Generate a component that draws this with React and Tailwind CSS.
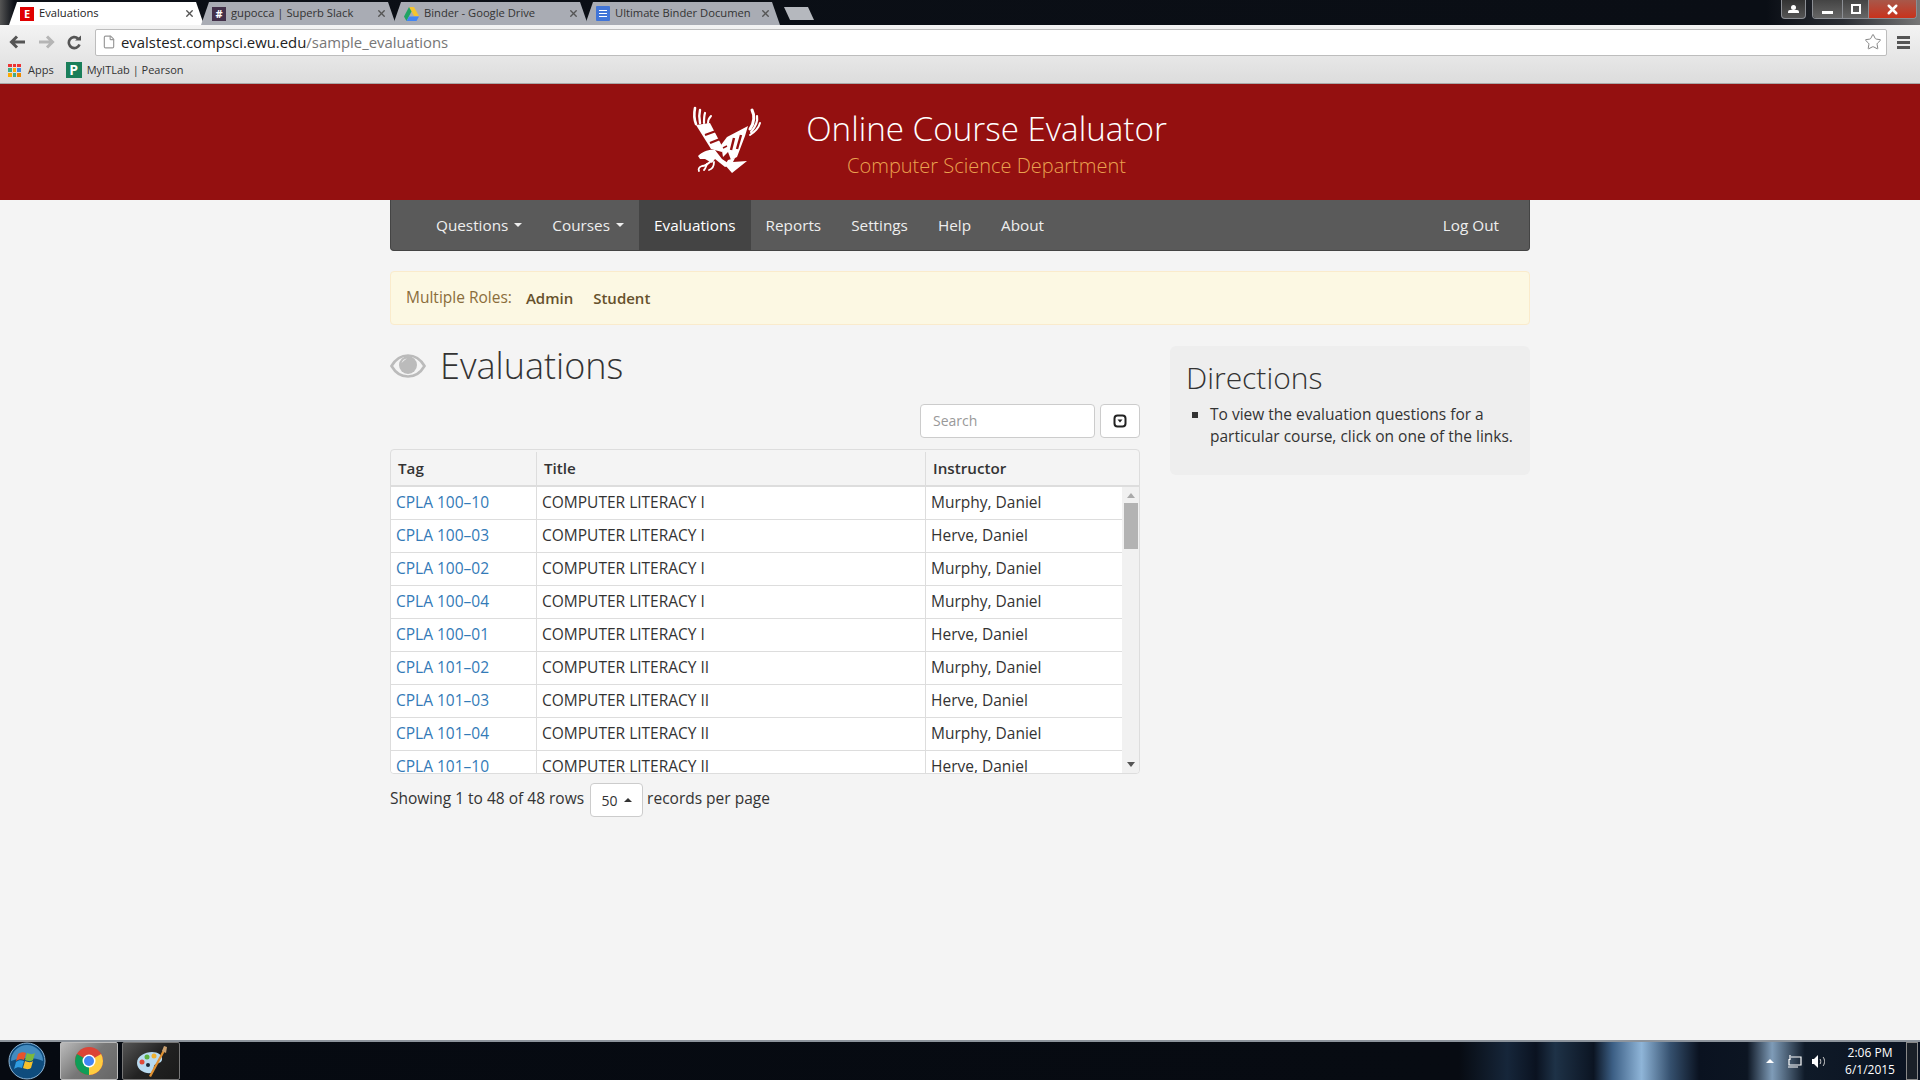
import React from 'react'
import { Star, X, File } from 'lucide-react'

const rows = [
  ['CPLA 100–10', 'COMPUTER LITERACY I', 'Murphy, Daniel'],
  ['CPLA 100–03', 'COMPUTER LITERACY I', 'Herve, Daniel'],
  ['CPLA 100–02', 'COMPUTER LITERACY I', 'Murphy, Daniel'],
  ['CPLA 100–04', 'COMPUTER LITERACY I', 'Murphy, Daniel'],
  ['CPLA 100–01', 'COMPUTER LITERACY I', 'Herve, Daniel'],
  ['CPLA 101–02', 'COMPUTER LITERACY II', 'Murphy, Daniel'],
  ['CPLA 101–03', 'COMPUTER LITERACY II', 'Herve, Daniel'],
  ['CPLA 101–04', 'COMPUTER LITERACY II', 'Murphy, Daniel'],
  ['CPLA 101–10', 'COMPUTER LITERACY II', 'Herve, Daniel'],
]

function Tab({ icon, label, active }) {
  return (
    <div className={`-mr-[3px] flex h-[23px] w-[195px] shrink-0 items-center pl-[11px] pr-[9px] text-[11.2px] [clip-path:polygon(0_100%,8px_0,calc(100%-8px)_0,100%_100%)] ${active ? 'bg-white text-[#222]' : 'bg-[#a9acb4] text-[#333]'}`}>
      <div className="mr-[5px] shrink-0">{icon}</div>
      <span className="flex-1 overflow-hidden whitespace-nowrap">{label}</span>
      <X size={11} strokeWidth={3} className="ml-1 shrink-0 text-[#555]" />
    </div>
  )
}

function Browser() {
  return (
    <div className="font-['Open_Sans',sans-serif]">
      <div className="flex h-[25px] items-end bg-[linear-gradient(90deg,#555_0,#0b0f16_14px,#0a0e15_92%,#2a2d33_96%,#777_100%)] pl-[9px]">
        <Tab active label="Evaluations" icon={
          <div className="flex h-[14px] w-[14px] items-center justify-center bg-[#e00000] text-[11px] font-bold leading-none text-white">E</div>
        } />
        <Tab label="gupocca | Superb Slack" icon={
          <div className="flex h-[14px] w-[14px] items-center justify-center bg-[#43304a] text-[11px] font-bold leading-none text-white">#</div>
        } />
        <Tab label="Binder - Google Drive" icon={
          <svg width="15" height="14" viewBox="0 0 15 14">
            <path d="M5 0h5l5 9h-5z" fill="#f4c430" />
            <path d="M5 0l2.500 4.500L2.500 14 0 9.500z" fill="#1fa463" />
            <path d="M2.500 14l2.500-4.500h10L12.500 14z" fill="#4285f4" />
          </svg>
        } />
        <Tab label="Ultimate Binder Documen" icon={
          <div className="flex h-[15px] w-[14px] flex-col justify-center gap-[2px] rounded-[1px] bg-[#4175d8] px-[3px]">
            <div className="h-px bg-white" />
            <div className="h-px bg-white" />
            <div className="h-px bg-white" />
          </div>
        } />
        <div className="mb-[5px] ml-[7px] h-[13px] w-[30px] bg-[#b5b8be] [clip-path:polygon(0_0,80%_0,100%_100%,20%_100%)]" />
        <div className="ml-auto flex h-[19px] self-start">
          <div className="mr-[6px] flex w-[25px] items-center justify-center rounded-b-[4px] border border-t-0 border-[#8b8e94] bg-[linear-gradient(#333,#555)]">
            <div className="flex flex-col items-center">
              <div className="h-[5px] w-[5px] rounded-full bg-white" />
              <div className="h-[3px] w-[11px] rounded-t-[2px] bg-white" />
            </div>
          </div>
          <div className="flex overflow-hidden rounded-b-[4px] border border-t-0 border-[#8b8e94]">
            <div className="flex w-[29px] items-end justify-center bg-[linear-gradient(#444,#666)] pb-[4px]">
              <div className="h-[3px] w-[11px] bg-white" />
            </div>
            <div className="flex w-[27px] items-center justify-center border-x border-[#8b8e94] bg-[linear-gradient(#444,#666)]">
              <div className="h-[10px] w-[10px] border-2 border-white" />
            </div>
            <div className="flex w-[47px] items-center justify-center bg-[linear-gradient(#a8584a,#c8321c)]">
              <X size={15} strokeWidth={4} className="text-white" />
            </div>
          </div>
          <div className="w-[3px]" />
        </div>
      </div>
      <div className="flex h-[59px] flex-col bg-[linear-gradient(#f3f3f3,#dcdcdc)]">
        <div className="flex h-[34px] items-center">
          <div className="flex w-[95px] items-center pl-[9px]">
            <svg width="17" height="14" viewBox="0 0 17 14" fill="none" stroke="#555" strokeWidth="3">
              <path d="M8 1.500 2.500 7 8 12.500M3 7h13" />
            </svg>
            <svg className="ml-[12px]" width="17" height="14" viewBox="0 0 17 14" fill="none" stroke="#b5b5b5" strokeWidth="3">
              <path d="M9 1.500 14.500 7 9 12.500M14 7H1" />
            </svg>
            <svg className="ml-[12px]" width="15" height="15" viewBox="0 0 15 15" fill="none" stroke="#555" strokeWidth="2.600">
              <path d="M12.500 9.500A5.500 5.500 0 1 1 11 3.500" />
              <path d="M8 5.500h6v-5z" fill="#555" stroke="none" />
            </svg>
          </div>
          <div className="flex h-[27px] flex-1 items-center rounded-[2px] border border-[#bdbdbd] bg-white pl-[6px] text-[14.9px]">
            <File size={14} className="mr-[5px] text-[#999]" />
            <span className="text-[#222]">evalstest.compsci.ewu.edu</span>
            <span className="text-[#777]">/sample_evaluations</span>
            <Star size={18} strokeWidth={1.200} className="ml-auto mr-[4px] text-[#777]" />
          </div>
          <div className="flex w-[33px] flex-col items-center gap-[2px]">
            <div className="h-[3px] w-[13px] bg-[#555]" />
            <div className="h-[3px] w-[13px] bg-[#555]" />
            <div className="h-[3px] w-[13px] bg-[#555]" />
          </div>
        </div>
        <div className="flex flex-1 items-center border-b border-[#a8a8a8] pb-[2px] pl-[8px] text-[11px] text-[#333]">
          <div className="grid h-[13px] w-[13px] grid-cols-3 gap-[1px]">
            <div className="bg-[#e33]" /><div className="bg-[#e33]" /><div className="bg-[#e33]" />
            <div className="bg-[#4a8]" /><div className="bg-[#fa0]" /><div className="bg-[#48d]" />
            <div className="bg-[#fa0]" /><div className="bg-[#4a8]" /><div className="bg-[#e80]" />
          </div>
          <span className="ml-[7px]">Apps</span>
          <div className="ml-[12px] flex h-[16px] w-[16px] items-center justify-center bg-[#1a7f5a] text-[14px] font-bold leading-none text-white">P</div>
          <span className="ml-[5px]">MyITLab | Pearson</span>
        </div>
      </div>
    </div>
  )
}

function EagleLogo() {
  return (
    <svg width="80" height="80" viewBox="0 0 80 80" fill="#fff">
      <g fill="none" stroke="#fff" strokeLinecap="round">
        <path d="M11 25C9 20 9 14 10 9" strokeWidth="2.600" />
        <path d="M15 24C14 19 14 15 15 11" strokeWidth="2.400" />
        <path d="M19 24C19 20 19 17 20 14" strokeWidth="2.200" />
        <path d="M23 24C23 21 24 19 26 17" strokeWidth="2" />
        <path d="M67 11C70 17 69 24 65 30" strokeWidth="3" />
        <path d="M72 17C73 22 71 27 66 33" strokeWidth="2.200" />
        <path d="M75 24C74 28 71 32 65 36" strokeWidth="2" />
      </g>
      <path d="M11 26 25 24 37 47 37 53 26 50z" />
      <path d="M42 38 63 27 60 37 52 58 46 61 43 53 38 58 36 46z" />
      <path d="M13 57C17 53 24 50 30 51L37 60 46 66 40 68 30 60 27 64 20 60 15 60z" />
      <path d="M43 61 50 59 48 63 62 62 47 74 40 66z" />
      <g fill="none" stroke="#941010">
        <path d="M20 36 31 32" strokeWidth="2.200" />
        <path d="M25 44 35 40" strokeWidth="2.200" />
        <path d="M49 39 46 51" strokeWidth="2.400" />
        <path d="M56 36 52 50" strokeWidth="2.400" />
        <path d="M38 49 42 47" strokeWidth="1.500" />
      </g>
      <g fill="none" stroke="#fff" strokeWidth="1.800" strokeLinecap="round">
        <path d="M26 62C22 66 20 67 17 67 14 68 13 70 14 72" />
        <path d="M29 63C29 68 27 70 24 71" />
        <path d="M22 65C21 67 21 69 19 71" />
      </g>
    </svg>
  )
}

function Caret({ up }) {
  return <span className={`ml-[6px] inline-block h-0 w-0 border-x-[4px] border-x-transparent align-middle ${up ? 'border-b-[4px] border-b-current' : 'border-t-[4px] border-t-current'}`} />
}

function NavItem({ label, caret, active }) {
  return (
    <div className={`flex h-full items-center px-[15px] text-[15.3px] ${active ? 'bg-[#444] text-white' : 'text-[#eee]'}`}>
      {label}
      {caret && <Caret />}
    </div>
  )
}

function EvalTable() {
  return (
    <div className="h-[325px] overflow-hidden rounded-[4px] border border-[#ddd]">
      <div className="flex h-[37px] border-b-2 border-[#ddd] pt-[2px] text-[15.2px] font-semibold text-[#333]">
        <div className="flex w-[146px] items-center border-r border-[#ddd] pl-[7px]">Tag</div>
        <div className="flex w-[389px] items-center border-r border-[#ddd] pl-[7px]">Title</div>
        <div className="flex flex-1 items-center pl-[7px]">Instructor</div>
      </div>
      <div className="flex h-[286px]">
        <div className="flex-1 overflow-hidden bg-white">
          {rows.map((r, i) => (
            <div key={i} className="flex h-[33px] shrink-0 border-b border-[#ddd] leading-[31px] text-[#333]">
              <div className="w-[146px] shrink-0 border-r border-[#ddd] pl-[5px] text-[#337ab7]">{r[0]}</div>
              <div className="w-[389px] shrink-0 border-r border-[#ddd] pl-[5px]">{r[1]}</div>
              <div className="flex-1 pl-[5px]">{r[2]}</div>
            </div>
          ))}
        </div>
        <div className="flex w-[17px] shrink-0 flex-col items-center bg-[#f1f1f1]">
          <div className="mt-[6px] h-0 w-0 border-x-[4px] border-b-[5px] border-x-transparent border-b-[#aaa]" />
          <div className="mt-[5px] h-[46px] w-[14px] bg-[#b3b3b3]" />
          <div className="mb-[6px] mt-auto h-0 w-0 border-x-[4px] border-t-[5px] border-x-transparent border-t-[#555]" />
        </div>
      </div>
    </div>
  )
}

function Taskbar() {
  return (
    <div className="relative flex h-[40px] items-center border-t-2 border-[#8d949c] bg-[linear-gradient(90deg,#060a11_0,#070b12_76%,#16263a_78.500%,#0a1220_80%,#1e3247_81%,#0b1422_83%,#3c5f85_84%,#8fb5d8_85.500%,#35506e_87%,#0a1220_88.500%,#0c1522_91%,#7f9cb8_92.300%,#0f1a28_94%,#0a1220_100%)] font-['Open_Sans',sans-serif]">
      <svg className="ml-[8px]" width="38" height="38" viewBox="0 0 38 38">
        <circle cx="19" cy="19" r="18" fill="#0f4c7d" stroke="#8fb6d6" strokeWidth="1" />
        <path d="M3 19a16 16 0 0 1 32 0c-8-4-22-4-32 0z" fill="#5aa6dc" opacity="0.700" />
        <path d="M10 12c3-2 6-2 8-1l-2 7c-2-1-5-1-8 1z" fill="#e8532b" />
        <path d="M19 11c3 1 5 2 8 0l-2 7c-3 2-5 1-8 0z" fill="#7cb93c" />
        <path d="M8 20c3-2 5-2 8-1l-2 7c-3-1-5-1-8 1z" fill="#2f9ce0" />
        <path d="M17 19c3 1 5 2 8 0l-2 7c-3 2-5 1-8 0z" fill="#f5c02c" />
      </svg>
      <div className="ml-[14px] flex h-[38px] w-[58px] items-center justify-center rounded-[2px] border border-[#bbb] bg-[linear-gradient(135deg,#bbb,#777_50%,#666)]">
        <svg width="30" height="30" viewBox="0 0 30 30">
          <circle cx="15" cy="15" r="14" fill="#db4437" />
          <path d="M15 15 2.900 8A14 14 0 0 0 15 29z" fill="#0f9d58" />
          <path d="M15 15 27.100 8A14 14 0 0 1 15 29z" fill="#ffcd40" />
          <circle cx="15" cy="15" r="6.500" fill="#fff" />
          <circle cx="15" cy="15" r="5" fill="#4285f4" />
        </svg>
      </div>
      <div className="ml-[4px] flex h-[38px] w-[58px] items-center justify-center rounded-[2px] border border-[#777] bg-[linear-gradient(135deg,#555,#222_50%,#1a1a1a)]">
        <svg width="34" height="34" viewBox="0 0 34 34">
          <path d="M3 19c0-7 8-11 15-11 6 0 11 3 10 8-1 4-7 3-8 6-1 4 1 6-3 7-6 1-14-3-14-10z" fill="#b8daf0" />
          <circle cx="8" cy="18" r="2.500" fill="#e04a3a" />
          <circle cx="13" cy="13" r="2.500" fill="#5cb040" />
          <circle cx="20" cy="12" r="2.500" fill="#f0b030" />
          <circle cx="14" cy="21" r="2" fill="#1a2a3a" />
          <path d="M15 32 29 6l2 1L17 33z" fill="#e09030" />
          <path d="M28 7l2-5 3 1-1 6z" fill="#c9a070" />
        </svg>
      </div>
      <div className="ml-auto flex items-center">
        <div className="h-0 w-0 border-x-[4px] border-b-[4px] border-x-transparent border-b-white" />
        <svg className="ml-[13px]" width="15" height="14" viewBox="0 0 15 14" fill="none" stroke="#fff" strokeWidth="1.200">
          <path d="M4 3h10v8H2V5M3 1v5M1 13h10" />
        </svg>
        <svg className="ml-[10px]" width="15" height="13" viewBox="0 0 15 13" fill="#fff">
          <path d="M0 4h2l4-4v13L2 9H0z" />
          <path d="M8 4c1 1 1 4 0 5M11 2c2 2 2 7 0 9" fill="none" stroke="#ccc" />
        </svg>
        <div className="ml-[13px] w-[60px] text-center text-[12px] leading-[17px] text-white">
          <div>2:06 PM</div>
          <div>6/1/2015</div>
        </div>
        <div className="ml-[6px] mr-[2px] h-[38px] w-[12px] border border-[#888] bg-[#1a2028]" />
      </div>
    </div>
  )
}

export default function App() {
  return (
    <div className="flex h-[1080px] w-[1920px] flex-col overflow-hidden bg-[#f4f4f4] font-['Open_Sans',sans-serif] text-[15.5px] text-[#333]">
      <Browser />

      <div className="flex h-[116px] shrink-0 items-center justify-center bg-[#941010]">
        <div className="mr-[41px] mt-[-6px]"><EagleLogo /></div>
        <div className="mt-[3px] text-center">
          <div className="text-[33.2px] font-light leading-[44px] text-white">Online Course Evaluator</div>
          <div className="text-[20px] font-light leading-[29px] text-[#eba24f]">Computer Science Department</div>
        </div>
        <div className="w-[68px]" />
      </div>

      <div className="mx-auto flex w-[1140px] flex-1 flex-col">
        <div className="flex h-[51px] shrink-0 items-center rounded-b-[4px] border border-t-0 border-[#444] bg-[#5a5a5a] pl-[30px] pr-[15px]">
          <NavItem label="Questions" caret />
          <NavItem label="Courses" caret />
          <NavItem label="Evaluations" active />
          <NavItem label="Reports" />
          <NavItem label="Settings" />
          <NavItem label="Help" />
          <NavItem label="About" />
          <div className="ml-auto h-full"><NavItem label="Log Out" /></div>
        </div>

        <div className="mt-[20px] flex h-[54px] items-center rounded-[4px] border border-[#faebcc] bg-[#fcf8e3] px-[15px] text-[#8a6d3b]">
          Multiple Roles:
          <span className="ml-[14px] text-[15px] font-semibold text-[#66512c]">Admin</span>
          <span className="ml-[20px] text-[15px] font-semibold text-[#66512c]">Student</span>
        </div>

        <div className="mt-[21px] flex items-start gap-[30px]">
          <div className="w-[750px] shrink-0">
            <div className="flex h-[40px] items-center text-[36px] font-light">
              <svg width="36" height="24" viewBox="0 0 36 24">
                <path d="M1.500 12C5 6 10.500 1.500 18 1.500S31 6 34.500 12C31 18 25.500 22.500 18 22.500S5 18 1.500 12z" fill="none" stroke="#bbb" strokeWidth="2.600" />
                <circle cx="18" cy="11" r="9" fill="#bbb" />
                <path d="M11.500 9A6.500 6.500 0 0 1 17 4.500C15 6 13.500 7 11.500 9z" fill="#eee" />
              </svg>
              <span className="ml-[14px]">Evaluations</span>
            </div>
            <div className="mt-[18px] flex justify-end">
              <div className="flex h-[34px] w-[175px] items-center rounded-[4px] border border-[#ccc] bg-white px-[12px] pb-[2px] text-[14px] text-[#999]">Search</div>
              <div className="ml-[5px] flex h-[34px] w-[40px] items-center justify-center rounded-[4px] border border-[#ccc] bg-white">
                <svg width="14" height="14" viewBox="0 0 14 14">
                  <rect x="1.500" y="1.500" width="11" height="11" rx="3" fill="none" stroke="#222" strokeWidth="2" />
                  <path d="M4.500 5.500h5L7 8.500z" fill="#222" />
                </svg>
              </div>
            </div>
            <div className="mt-[11px]"><EvalTable /></div>
            <div className="mt-[9px] flex items-center">
              <span className="mb-[2px]">Showing 1 to 48 of 48 rows</span>
              <div className="ml-[6px] flex h-[34px] w-[53px] items-center justify-center rounded-[4px] border border-[#ccc] bg-white text-[14px]">
                50<Caret up />
              </div>
              <span className="mb-[2px] ml-[4px]">records per page</span>
            </div>
          </div>

          <div className="h-[129px] w-[360px] rounded-[6px] bg-[#eee] pl-[16px] pr-[8px] pt-[13px]">
            <div className="text-[30px] font-light leading-[38px]">Directions</div>
            <ul className="mt-[6px] list-[square] pl-[24px] leading-[22px]">
              <li>To view the evaluation questions for a particular course, click on one of the links.</li>
            </ul>
          </div>
        </div>
      </div>

      <Taskbar />
    </div>
  )
}
